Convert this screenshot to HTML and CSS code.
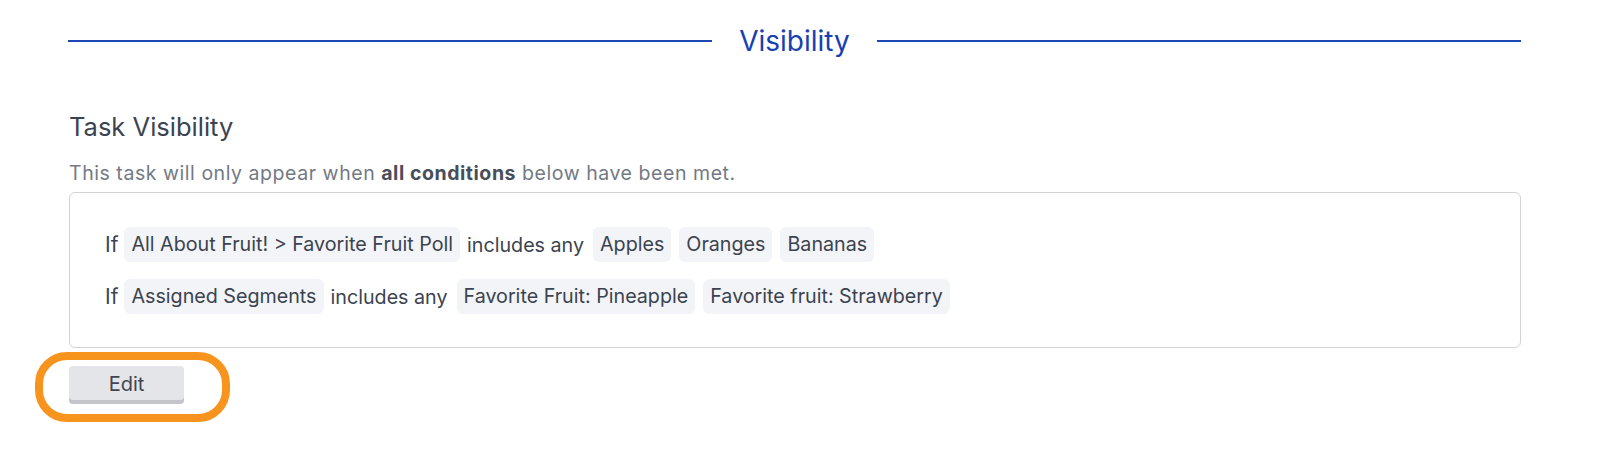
FILE: index.html
```html
<!DOCTYPE html>
<html lang="en">
<head>
    <meta charset="UTF-8">
    <meta name="viewport" content="width=device-width, initial-scale=1.0">
    <title>Task Visibility</title>
    <link rel="stylesheet" href="styles.css">
</head>
<body>
    <div class="page">
        <div class="section_title">
            <span class="rule"></span>
            <h2>Visibility</h2>
            <span class="rule"></span>
        </div>

        <h3 class="sub_title">Task Visibility</h3>
        <p class="hint">This task will only appear when <b>all conditions</b> below have been met.</p>

        <div class="conditions">
            <div class="cond_row">
                <span class="cond_if">If</span>
                <span class="chip">All About Fruit! &gt; Favorite Fruit Poll</span>
                <span class="cond_op">includes any</span>
                <span class="chip">Apples</span>
                <span class="chip">Oranges</span>
                <span class="chip">Bananas</span>
            </div>
            <div class="cond_row">
                <span class="cond_if">If</span>
                <span class="chip">Assigned Segments</span>
                <span class="cond_op">includes any</span>
                <span class="chip">Favorite Fruit: Pineapple</span>
                <span class="chip">Favorite fruit: Strawberry</span>
            </div>
        </div>

        <div class="edit_wrap">
            <button class="edit_btn" type="button">Edit</button>
            <span class="highlight"></span>
        </div>
    </div>
</body>
</html>
```

FILE: styles.css
```css
body {
    font-family: Inter, "Noto Sans", Arial, sans-serif;
    margin: 0;
    padding: 0;
    background-color: #fff;
    color: #3b4350;
}
.page {
    padding: 23px 79px 40px 68px;
}
.section_title {
    display: flex;
    align-items: center;
    gap: 27px;
}
.section_title h2 {
    margin: 0;
    font-size: 28px;
    font-weight: 400;
    color: #1740b0;
    line-height: 36px;
}
.rule {
    flex: 1;
    height: 1.5px;
    background-color: #1c47b5;
}
.sub_title {
    margin: 52px 0 0 1px;
    font-size: 25.5px;
    font-weight: 400;
    line-height: 32px;
    color: #3b4350;
}
.hint {
    margin: 18px 0 0 1px;
    font-size: 19.5px;
    letter-spacing: 0.55px;
    line-height: 24px;
    color: #727985;
}
.hint b {
    color: #474e5a;
    font-weight: 700;
}
.conditions {
    margin-top: 7px;
    margin-left: 1px;
    border: 1px solid #d3d3d3;
    border-radius: 6px;
    padding: 34px 35px 33px;
    display: flex;
    flex-direction: column;
    gap: 17px;
}
.cond_row {
    display: flex;
    align-items: center;
    gap: 8px;
    font-size: 19.7px;
}
.cond_if {
    font-size: 21px;
    margin-right: -2px;
}
.cond_op {
    margin: 0 1px 0 -1px;
}
.chip {
    background-color: #f3f4f7;
    border-radius: 6px;
    padding: 0 7px;
    line-height: 35px;
    color: #3b4350;
}
.edit_wrap {
    position: relative;
    margin: 18px 0 0 1px;
    width: 115px;
}
.edit_btn {
    display: block;
    width: 115px;
    height: 38px;
    border: none;
    border-radius: 4px;
    background-color: #e4e5e9;
    box-shadow: inset 0 -4px 0 #c3c5ca;
    padding: 0 0 3px;
    font-family: inherit;
    font-size: 20px;
    color: #3f4653;
}
.highlight {
    position: absolute;
    left: -34px;
    top: -14px;
    width: 179px;
    height: 54px;
    border: 8px solid #f7941d;
    border-radius: 32px;
    pointer-events: none;
}
```
